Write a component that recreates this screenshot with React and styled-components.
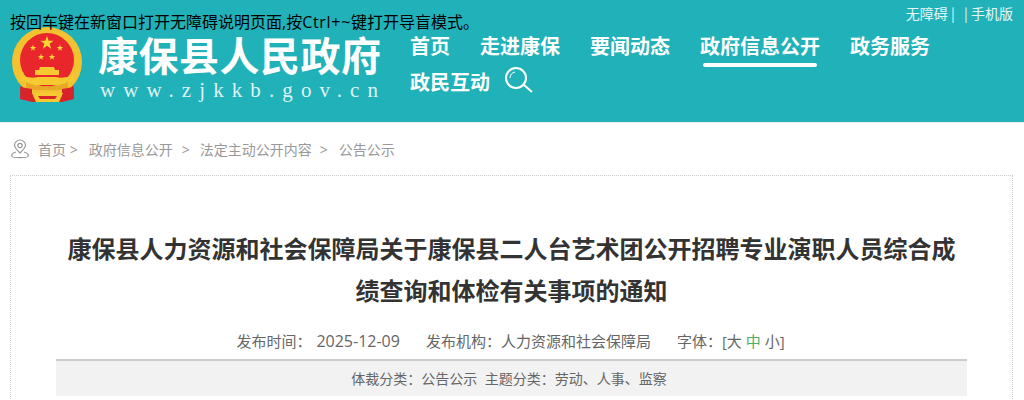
import React from 'react';
import styled, { createGlobalStyle } from 'styled-components';

const stack = '"Open Sans", "Noto Sans CJK SC", sans-serif';
const cjk = '"Noto Sans CJK SC", sans-serif';

const Global = createGlobalStyle`
  html, body {
    margin: 0;
    padding: 0;
    background: #fff;
    font-family: ${stack};
    overflow: hidden;
  }
`;

const Page = styled.div`
  position: relative;
  width: 1024px;
  height: 400px;
  overflow: hidden;
`;

const AccessHint = styled.div`
  position: absolute;
  left: 10px;
  top: 11px;
  font-size: 16px;
  line-height: 22px;
  color: #000;
  white-space: nowrap;
`;

const HintKey = styled.span`
  letter-spacing: 0.7px;
`;

const Header = styled.header`
  display: flex;
  height: 122px;
  background: #21b1b8;
  border-bottom: 1px solid #f0f0f0;
`;

const Brand = styled.div`
  display: flex;
  width: 410px;
  padding: 27px 0 0 12px;
  box-sizing: border-box;
  flex: none;
`;

const Emblem = styled.svg`
  width: 70px;
  height: 76px;
  flex: none;
`;

const BrandText = styled.div`
  margin-left: 16px;
  display: flex;
  flex-direction: column;
`;

const BrandName = styled.div`
  color: #fff;
  font-family: ${cjk};
  font-size: 40px;
  line-height: 48px;
  font-weight: 700;
  letter-spacing: 0.5px;
  margin-top: 3px;
  white-space: nowrap;
`;

const BrandUrl = styled.div`
  color: #dff3f4;
  font-family: "Liberation Serif", serif;
  font-size: 21px;
  line-height: 24px;
  letter-spacing: 8.1px;
  margin: 0 0 0 2px;
  white-space: nowrap;
`;

const Right = styled.div`
  flex: 1;
  display: flex;
  flex-direction: column;
`;

const TopLinks = styled.div`
  height: 29px;
  display: flex;
  justify-content: flex-end;
  padding: 3px 11px 0 0;
  box-sizing: border-box;
  color: #e6f6f7;
  font-family: ${cjk};
  font-size: 14px;
  line-height: 20px;
  white-space: pre;
`;

const Nav = styled.nav`
  display: flex;
  flex-wrap: wrap;
  align-items: flex-start;
  column-gap: 30px;
`;

const NavItem = styled.a`
  position: relative;
  height: 36px;
  color: #fff;
  font-size: 20px;
  line-height: 36px;
  font-weight: 700;
  white-space: nowrap;
  ${(p) =>
    p.$active &&
    `&::after {
      content: '';
      position: absolute;
      left: 3px;
      right: 3px;
      bottom: -2px;
      height: 4px;
      border-radius: 2px;
      background: #fff;
    }`}
`;

const SearchIcon = styled.svg`
  width: 30px;
  height: 30px;
  margin: 1px 0 0 -15px;
`;

const Crumbs = styled.div`
  display: flex;
  align-items: center;
  height: 52px;
  padding-left: 10px;
  color: #999;
  font-size: 14px;
  white-space: nowrap;
`;

const PinIcon = styled.svg`
  width: 20px;
  height: 20px;
  margin-right: 8px;
`;

const Crumb = styled.span`
  margin-right: ${(p) => p.$gap}px;
`;

const Card = styled.main`
  margin: 0 11px 0 10px;
  height: 300px;
  border: 1px dotted #ccc;
  padding: 0 45px;
`;

const Title = styled.h1`
  margin: 52px 0 0;
  font-size: 24px;
  line-height: 42px;
  font-weight: 700;
  color: #333;
  text-align: center;
`;

const Meta = styled.div`
  display: flex;
  justify-content: center;
  margin-top: 15px;
  height: 32px;
  padding-right: 2px;
  color: #666;
  font-size: 15px;
  line-height: 28px;
  white-space: pre;
`;

const MetaItem = styled.span`
  margin-right: ${(p) => p.$gap || 0}px;
`;

const MetaDate = styled.span`
  margin-left: 5px;
  font-size: 16px;
`;

const SizeLink = styled.span`
  color: ${(p) => (p.$on ? '#4caf68' : '#666')};
`;

const Tags = styled.div`
  height: 35px;
  padding-right: 5px;
  background: #f2f2f2;
  border-top: 2px solid #ccc;
  color: #666;
  font-size: 14px;
  line-height: 36px;
  text-align: center;
  white-space: pre;
`;

const StarShape = ({ cx, cy, r }) => {
  const pts = [];
  for (let i = 0; i < 10; i++) {
    const a = -Math.PI / 2 + (i * Math.PI) / 5;
    const d = i % 2 ? r * 0.4 : r;
    pts.push(`${cx + d * Math.cos(a)},${cy + d * Math.sin(a)}`);
  }
  return <polygon points={pts.join(' ')} fill="#fbd635" />;
};

const App = () => {
  return (
    <Page>
      <Global />
      <Header>
        <Brand>
          <Emblem viewBox="0 0 70 76">
            <path d="M9 56 L8 72 L20 75 L50 75 L62 72 L61 56 Z" fill="#d8232a" />
            <circle cx="35" cy="35" r="35" fill="#f2c230" />
            <circle cx="35" cy="33" r="27" fill="#e8262b" />
            <StarShape cx={35} cy={16} r={7} />
            <StarShape cx={21} cy={21} r={3.4} />
            <StarShape cx={48} cy={21} r={3.4} />
            <StarShape cx={29} cy={30} r={3.4} />
            <StarShape cx={40} cy={30} r={3.4} />
            <path d="M28 40 H42 L43 43 H47 V48 H23 V43 H27 Z" fill="#f5c92f" />
            <path d="M8 48 Q18 52 26 50 H44 Q52 52 62 48 L62 54 Q50 60 40 58 H30 Q20 60 8 54 Z" fill="#f5c92f" />
            <path d="M14 55 Q24 60 35 59 Q46 60 56 55 L56 62 Q46 64 35 63 Q24 64 14 62 Z" fill="#e9a825" />
            <path d="M8 60 L20 62 L20 74 L9 72 Z" fill="#d8232a" />
            <path d="M62 60 L50 62 L50 74 L61 72 Z" fill="#d8232a" />
            <path d="M20 66 H51 L47 75 H24 Z" fill="#f5c92f" />
            <path d="M26 69 H45 L43 72 H28 Z" fill="#d8232a" />
          </Emblem>
          <BrandText>
            <BrandName>康保县人民政府</BrandName>
            <BrandUrl>www.zjkkb.gov.cn</BrandUrl>
          </BrandText>
        </Brand>
        <Right>
          <TopLinks>无障碍 |   | 手机版</TopLinks>
          <Nav>
            <NavItem>首页</NavItem>
            <NavItem>走进康保</NavItem>
            <NavItem>要闻动态</NavItem>
            <NavItem $active>政府信息公开</NavItem>
            <NavItem>政务服务</NavItem>
            <NavItem>政民互动</NavItem>
            <SearchIcon viewBox="0 0 30 30" fill="none" stroke="#fff">
              <circle cx="11" cy="12" r="10" strokeWidth="2" />
              <path d="M5 12 A6.5 6.5 0 0 1 10 6" strokeWidth="1" />
              <path d="M19 19 L27 26" strokeWidth="2" />
            </SearchIcon>
          </Nav>
        </Right>
      </Header>
      <AccessHint>
        按回车键在新窗口打开无障碍说明页面,按<HintKey>Ctrl+~</HintKey>键打开导盲模式。
      </AccessHint>
      <Crumbs>
        <PinIcon viewBox="0 0 20 20" fill="none" stroke="#999" strokeWidth="1.2">
          <path d="M10 14 C7 11 4.5 8.5 4.5 6.5 A5.5 5.5 0 0 1 15.5 6.5 C15.5 8.5 13 11 10 14 Z" />
          <circle cx="10" cy="6.5" r="2.2" />
          <path d="M6 13 C2 14 1 16 2 17.5 C3 19 17 19 18 17.5 C19 16 18 14 14 13" />
        </PinIcon>
        <Crumb $gap={11}>首页 &gt;</Crumb>
        <Crumb $gap={9}>政府信息公开</Crumb>
        <Crumb $gap={10}>&gt;</Crumb>
        <Crumb $gap={8}>法定主动公开内容</Crumb>
        <Crumb $gap={11}>&gt;</Crumb>
        <Crumb>公告公示</Crumb>
      </Crumbs>
      <Card>
        <Title>康保县人力资源和社会保障局关于康保县二人台艺术团公开招聘专业演职人员综合成绩查询和体检有关事项的通知</Title>
        <Meta>
          <MetaItem $gap={26}>
            发布时间：<MetaDate>2025-12-09</MetaDate>
          </MetaItem>
          <MetaItem $gap={26}>发布机构：人力资源和社会保障局</MetaItem>
          <MetaItem>
            字体：[大 <SizeLink $on>中</SizeLink> <SizeLink>小</SizeLink>]
          </MetaItem>
        </Meta>
        <Tags>体裁分类：公告公示  主题分类：劳动、人事、监察</Tags>
      </Card>
    </Page>
  );
};

export default App;
